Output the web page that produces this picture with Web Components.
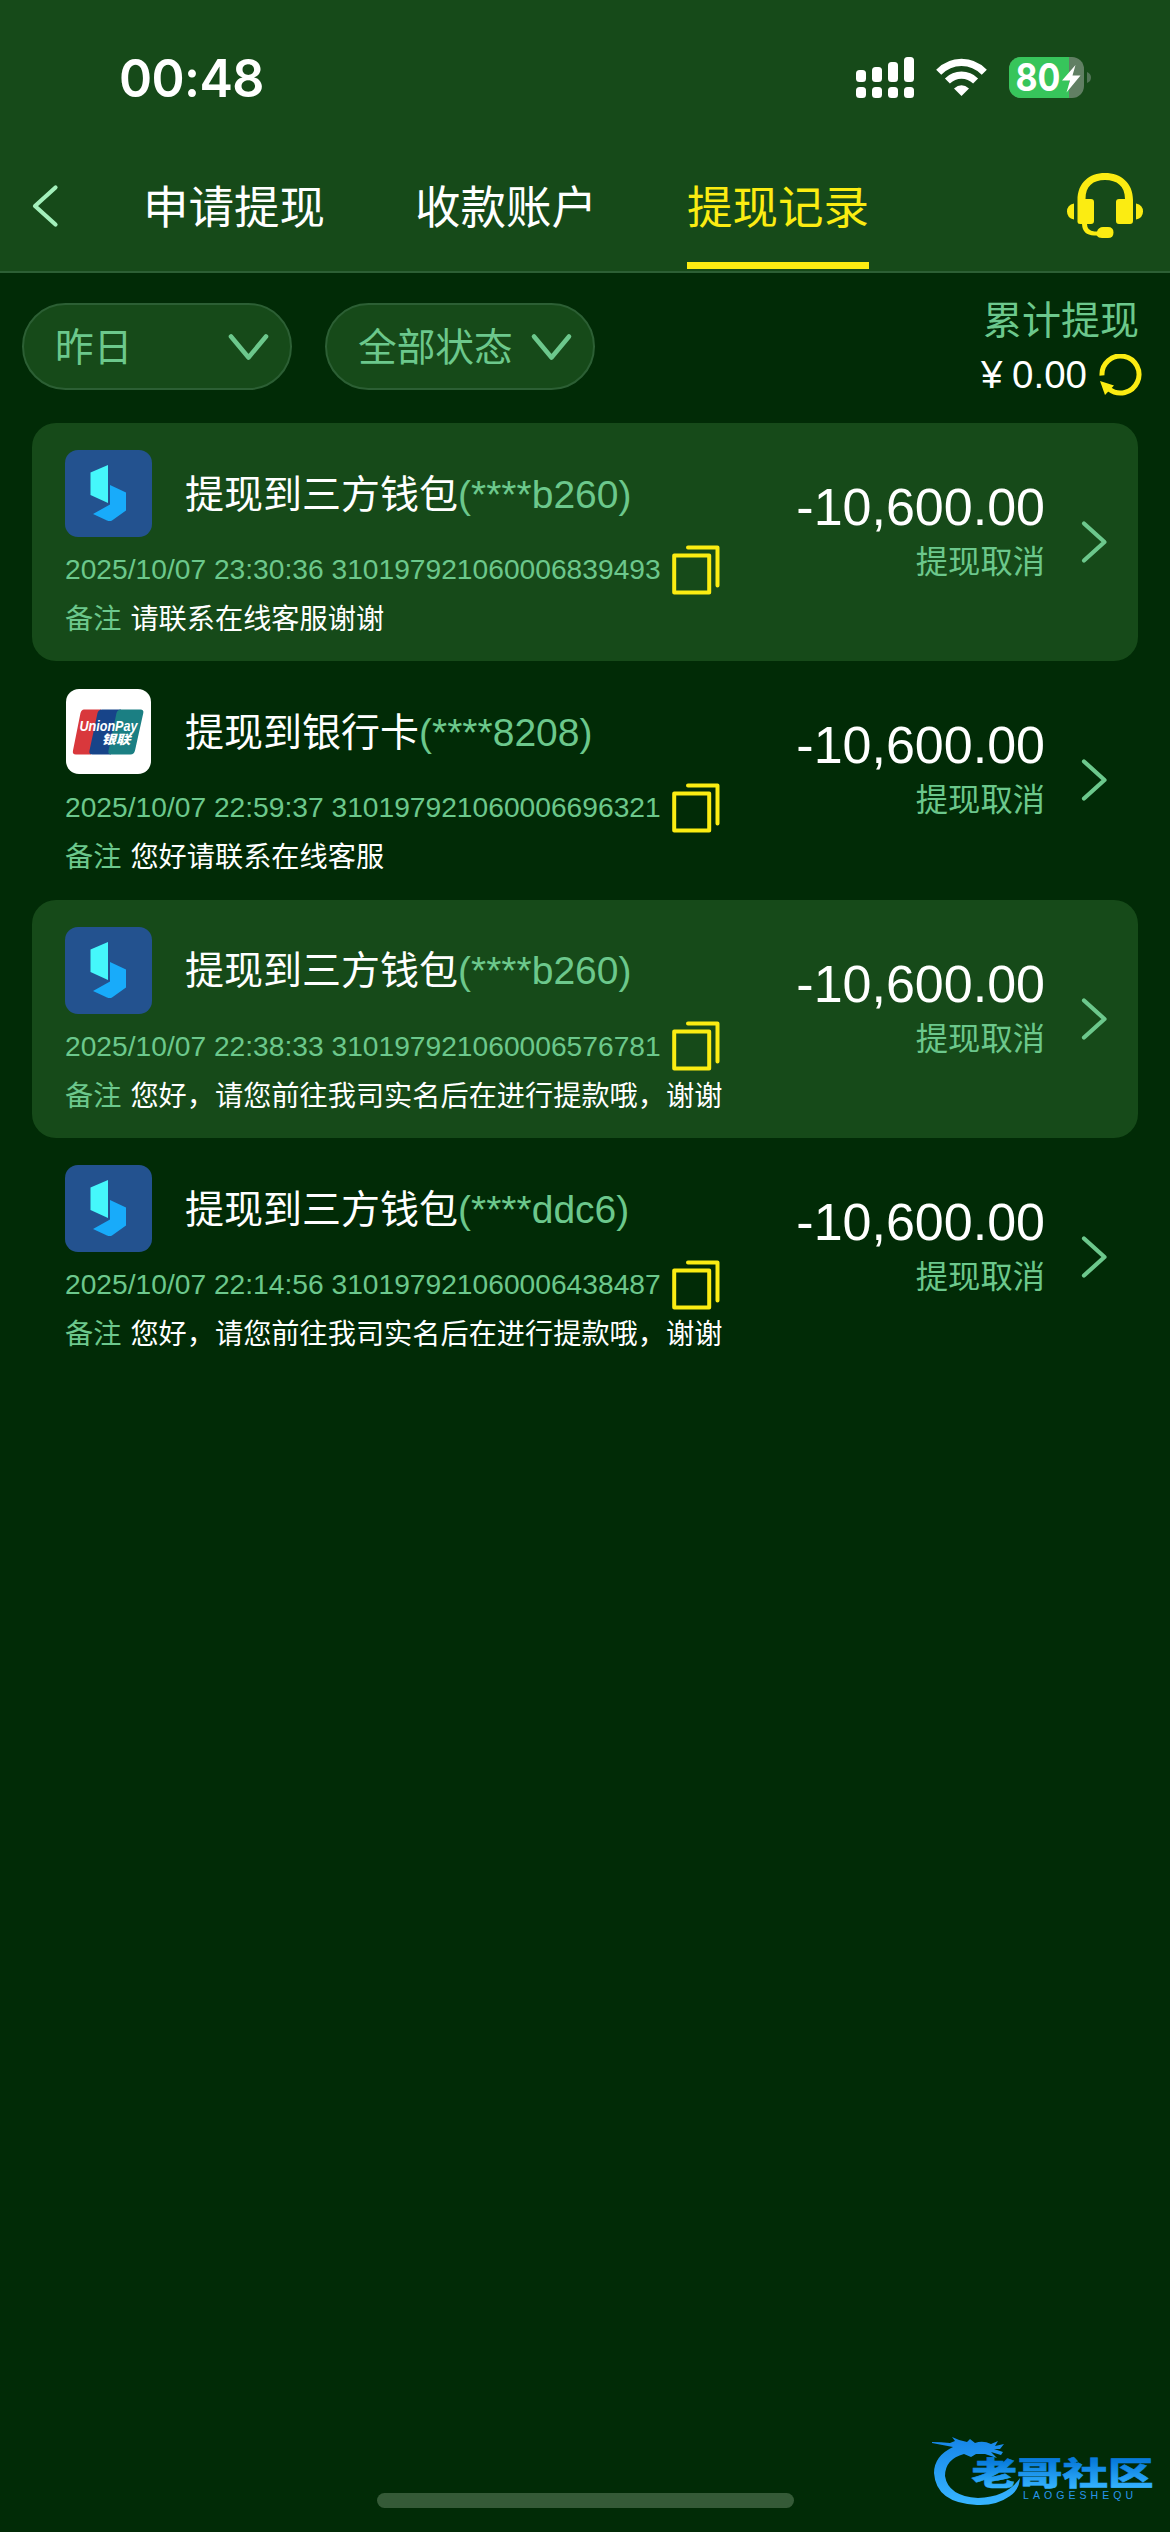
<!DOCTYPE html>
<html lang="zh-CN">
<head>
<meta charset="utf-8">
<title>提现记录</title>
<style>
html,body{margin:0;background:#012b06}
body{width:1170px;height:2532px;overflow:hidden;font-family:"Liberation Sans","Noto Sans CJK SC",sans-serif;
--bar:#164a19;--line:#2c5f34;--mint:#6cc88c;--yellow:#fbec12;color:#fff}
</style>
</head>
<body>
<wd-app></wd-app>
<script>
const define=(name,html)=>customElements.define(name,class extends HTMLElement{
  constructor(){super();const t=document.createElement('template');t.innerHTML=html;
    this.attachShadow({mode:'open'}).append(t.content.cloneNode(true));}
});

define('status-bar',`<style>
:host{display:flex;height:141px;align-items:flex-start;box-sizing:border-box;padding:57px 79px 0 119px;justify-content:space-between}
.time{font:600 52px/43px Inter,sans-serif;width:160px;letter-spacing:-.6px;transform:scaleX(.965);transform-origin:0 0}
.r{display:flex;height:41px}
svg{display:block;overflow:visible}
.wifi{margin-left:22px}.bat{margin-left:22px}
text{font:700 38px Inter,sans-serif}
</style>
<div class="time">00:48</div>
<div class="r">
<svg width="58" height="41" fill="#fff"><rect y="13" width="10" height="12" rx="3.500"/><rect x="16" y="10" width="10" height="15" rx="3.500"/><rect x="32" y="5" width="10" height="20" rx="3.500"/><rect x="48" width="10" height="25" rx="3.500"/><rect y="30" width="10" height="11" rx="3.500"/><rect x="16" y="30" width="10" height="11" rx="3.500"/><rect x="32" y="30" width="10" height="11" rx="3.500"/><rect x="48" y="30" width="10" height="11" rx="3.500"/></svg>
<svg class="wifi" width="51" height="41" fill="none" stroke="#fff" stroke-width="7.2"><path d="M2.700 15.200Q12.500 5.400 25.500 5.400T48.300 15.200"/><path d="M11.400 24Q17.500 18.200 25.500 18.200T39.600 24"/><path d="M18 31.500Q25.500 25 33 31.500L25.500 39Z" fill="#fff" stroke="none"/></svg>
<svg class="bat" width="82" height="41"><defs><clipPath id="b"><rect width="75" height="41" rx="12"/></clipPath></defs><g clip-path="url(#b)"><rect width="75" height="41" fill="#617f63"/><rect width="60" height="41" fill="#37c55b"/></g><path d="M78 15q4 1.500 4 5.500t-4 5.500z" fill="#527456"/><text x="6.500" y="34.300" textLength="45" lengthAdjust="spacingAndGlyphs" fill="#fff">80</text><path d="M66.500 8L53 23.500h8L57.500 35.500L71.500 18.500H63.500Z" fill="#fff"/></svg>
</div>`);

define('nav-tab',`<style>
:host{display:flex;height:132px;box-sizing:border-box;padding-top:35px;font-size:45.500px;line-height:66px;width:182px;border-bottom:0 solid var(--yellow);white-space:nowrap}
:host([active]){color:var(--yellow);height:128px;border-bottom-width:7px}
</style><slot></slot>`);

define('nav-bar',`<style>
:host{display:flex;height:132px;border-bottom:2px solid var(--line);box-sizing:border-box;padding-left:31px}
.back{margin-top:43px;width:112px}
.tabs{display:flex;gap:90px}
.kf{margin:31px 27px 0 auto}
svg{display:block}
</style>
<svg class="back" width="28" height="44" fill="none" stroke="#a3f0bb" stroke-width="4.200" stroke-linecap="round" stroke-linejoin="round"><path d="M24.500 3.500L4 22L24.500 40.500"/></svg>
<div class="tabs"><nav-tab>申请提现</nav-tab><nav-tab>收款账户</nav-tab><nav-tab active>提现记录</nav-tab></div>
<svg class="kf" width="76" height="66" fill="var(--yellow)"><path d="M7 31.500Q0 33 0 39.500T7 47.500ZM69 31.500Q76 33 76 39.500T69 47.500Z"/><path d="M10.500 50V28C10.500 11 22 1 38 1S66 11 66 28V49Q66 52 63 52H52Q49 52 49 49V30Q49 27 52 27H58C58 14 50 8 38 8S18.500 14 18.500 27H24Q27 27 27 30V49Q27 52 24 52H20Q20 59 27.500 59.500H30Q31.500 55 36 55H41Q46.500 55 46.500 60.500T41 66H35Q31.500 66 29.500 63.500H27Q15.500 63 15 52H13Q10.500 52 10.500 50Z"/></svg>`);

define('filter-pill',`<style>
:host{display:flex;align-items:center;justify-content:space-between;width:270px;height:87px;box-sizing:border-box;border:2px solid var(--line);border-radius:44px;background:var(--bar);color:var(--mint);padding:2px 20px 0 31px;font-size:38.700px;line-height:60px;white-space:nowrap}
svg{display:block;margin-top:-2px}
</style><span><slot></slot></span><svg width="43" height="30" fill="none" stroke="var(--mint)" stroke-width="4.600" stroke-linecap="round" stroke-linejoin="round"><path d="M4 4.500L21.500 25.500L39 4.500"/></svg>`);

define('filter-row',`<style>
:host{display:flex;padding:30px 28px 0 22px;height:150px;box-sizing:border-box}
.p{display:flex;gap:33px}
.sum{margin-left:auto;display:flex;flex-direction:column;align-items:flex-end;margin-top:-9px}
.t{font-size:39px;line-height:54px;color:var(--mint);margin-right:3px}
.v{display:flex;align-items:center;font-size:38.500px;line-height:54px;white-space:pre;word-spacing:-1px}
svg{display:block;margin-left:12px}
</style>
<div class="p"><filter-pill>昨日</filter-pill><filter-pill>全部状态</filter-pill></div>
<div class="sum"><div class="t">累计提现</div><div class="v"><span>¥ 0.00</span><svg width="43" height="42"><path d="M3 21.500A18.500 18.500 0 1 1 10 35" fill="none" stroke="var(--yellow)" stroke-width="5"/><path d="M1 27L15 31.500L6 41Z" fill="var(--yellow)"/></svg></div></div>`);

define('wallet-icon',`<style>:host{display:block;width:87px;height:87px;border-radius:13px;background:#23528f}svg{display:block}</style>
<svg width="87" height="87"><path d="M25.500 22.500L43 15V53L25.500 45Z" fill="#45f7fb"/><path d="M45 35L61 42.500V60.500L47 70.500Q45 71.500 42 70.500L28 64L45 54.500Z" fill="#18abfa"/></svg>`);

define('unionpay-icon',`<style>:host{display:block;width:85px;height:85px;border-radius:13px;background:#fff;margin:1px}svg{display:block}
.e{font:italic 700 14.500px "Liberation Sans",sans-serif}.c{font:italic 900 12.500px "Noto Sans CJK SC",sans-serif}</style>
<svg width="85" height="85"><path d="M18 20.500H35L25 65.500H10Q6 65.500 7 61.500L14.500 24Q15.500 20.500 18 20.500Z" fill="#d9383c"/><path d="M36 20.500H55L45 65.500H26.500Q22.500 65.500 23.500 61.500L31.500 24Q32.500 20.500 36 20.500Z" fill="#174489"/><path d="M55 20.500H74.500Q78 20.500 77.300 24L69 61.500Q68 65.500 64.500 65.500H45.500Q41.500 65.500 42.500 61.500L50.500 24Q51.500 20.500 55 20.500Z" fill="#1b7f83"/><text class="e" x="13.500" y="42" fill="#fff" textLength="58" lengthAdjust="spacingAndGlyphs">UnionPay</text><text class="c" x="35.500" y="54.800" fill="#fff" textLength="29" lengthAdjust="spacingAndGlyphs">银联</text></svg>`);

define('record-row',`<style>
:host{display:flex;height:238.400px;width:1106px;box-sizing:border-box;padding:27px 30px 0 33px;border-radius:24px;white-space:nowrap}
:host([filled]){background:var(--bar)}
.l{display:flex;flex-direction:column}
.h{display:flex;align-items:center;height:87px;font-size:39px;line-height:60px}
.h>slot:not([name=icon]),.m{display:block;padding-top:2px}
.ic{width:120px;flex:none}
.m{color:var(--mint)}
.d{display:flex;align-items:center;height:49px;margin-top:8px;font-size:28.200px;color:var(--mint)}
.d svg{margin-left:10px}
.n{display:flex;font-size:28.200px;line-height:40px;margin-top:5px;gap:9px}
.n .m{padding:0}
.a{margin-left:auto;display:flex;flex-direction:column;align-items:flex-end;padding-top:28px}
.x{font-size:52px;line-height:58px}
.s{font-size:32.300px;line-height:40px;margin-top:6px;color:var(--mint)}
.go{margin:70px 0 0 35px}
svg{display:block}
</style>
<div class="l"><div class="h"><div class="ic"><slot name="icon"></slot></div><slot name="title"></slot><span class="m"><slot name="acct"></slot></span></div>
<div class="d"><slot name="id"></slot><svg width="50" height="50" fill="none" stroke="var(--yellow)" stroke-width="4" stroke-linejoin="round" stroke-linecap="round"><rect x="3.200" y="10.500" width="35" height="37"/><path d="M17 2.500H46.500V40.500"/></svg></div>
<div class="n"><span class="m">备注</span><slot name="note"></slot></div></div>
<div class="a"><div class="x"><slot name="amount"></slot></div><div class="s"><slot name="state"></slot></div></div>
<svg class="go" width="28" height="44" fill="none" stroke="var(--mint)" stroke-width="4.200" stroke-linecap="round" stroke-linejoin="round"><path d="M4 3.500L24.500 22L4 40.500"/></svg>`);

define('site-mark',`<style>:host{display:block;position:absolute;left:928px;top:2430px}svg{display:block}
.c{font:900 41px "Noto Sans CJK SC",sans-serif}.e{font:400 10.500px "Liberation Sans",sans-serif}</style>
<svg width="232" height="84"><defs><linearGradient id="g" x1="0" y1="0" x2="0" y2="80" gradientUnits="userSpaceOnUse"><stop offset=".1" stop-color="#1685e8"/><stop offset=".9" stop-color="#36b4ff"/></linearGradient><linearGradient id="h" x1="0" y1="-31" x2="0" y2="4" gradientUnits="userSpaceOnUse"><stop stop-color="#087bdc"/><stop offset="1" stop-color="#35b4ff"/></linearGradient></defs>
<path fill="url(#g)" d="M4 12Q13 12 22 13L27 11L24 7Q32 11 39 12L42 9L47 13Q55 10 63 14L70 11L67 16L76 14L72 19L66 19L75 22L73 25L63 22L69 28L57 24L48 24L43 27L36 24Q17 29 17 46Q20 66 50 68Q79 67 92 48Q91 60 82 66Q68 76 49 75Q8 73 6 43Q6 26 25 17L4 13Z"/>
<text class="c" transform="translate(43.500 55) scale(1 .77)" textLength="182" lengthAdjust="spacingAndGlyphs" fill="url(#h)" stroke="url(#h)" stroke-width=".7">老哥社区</text>
<text class="e" x="95" y="69" textLength="110" fill="#2897ee">LAOGESHEQU</text></svg>`);

const wallet='<wallet-icon slot="icon"></wallet-icon>',union='<unionpay-icon slot="icon"></unionpay-icon>';
const rows=[
 [1,wallet,'提现到三方钱包','(****b260)','2025/10/07 23:30:36 310197921060006839493','请联系在线客服谢谢'],
 [0,union,'提现到银行卡','(****8208)','2025/10/07 22:59:37 310197921060006696321','您好请联系在线客服'],
 [1,wallet,'提现到三方钱包','(****b260)','2025/10/07 22:38:33 310197921060006576781','您好，请您前往我司实名后在进行提款哦，谢谢'],
 [0,wallet,'提现到三方钱包','(****ddc6)','2025/10/07 22:14:56 310197921060006438487','您好，请您前往我司实名后在进行提款哦，谢谢']
].map(r=>`<record-row ${r[0]?'filled':''}>${r[1]}<span slot="title">${r[2]}</span><span slot="acct">${r[3]}</span><span slot="id">${r[4]}</span><span slot="note">${r[5]}</span><span slot="amount">-10,600.00</span><span slot="state">提现取消</span></record-row>`).join('');

define('wd-app',`<style>
:host{display:flex;flex-direction:column;height:2532px;position:relative}
header{background:var(--bar);height:273px}
main{display:flex;flex-direction:column;padding-left:32px}
.home{width:417px;height:15px;border-radius:8px;background:#355a37;margin:auto 0 24px 377px}
</style>
<header><status-bar></status-bar><nav-bar></nav-bar></header>
<filter-row></filter-row>
<main>${rows}</main>
<div class="home"></div>
<site-mark></site-mark>`);
</script>
</body>
</html>
